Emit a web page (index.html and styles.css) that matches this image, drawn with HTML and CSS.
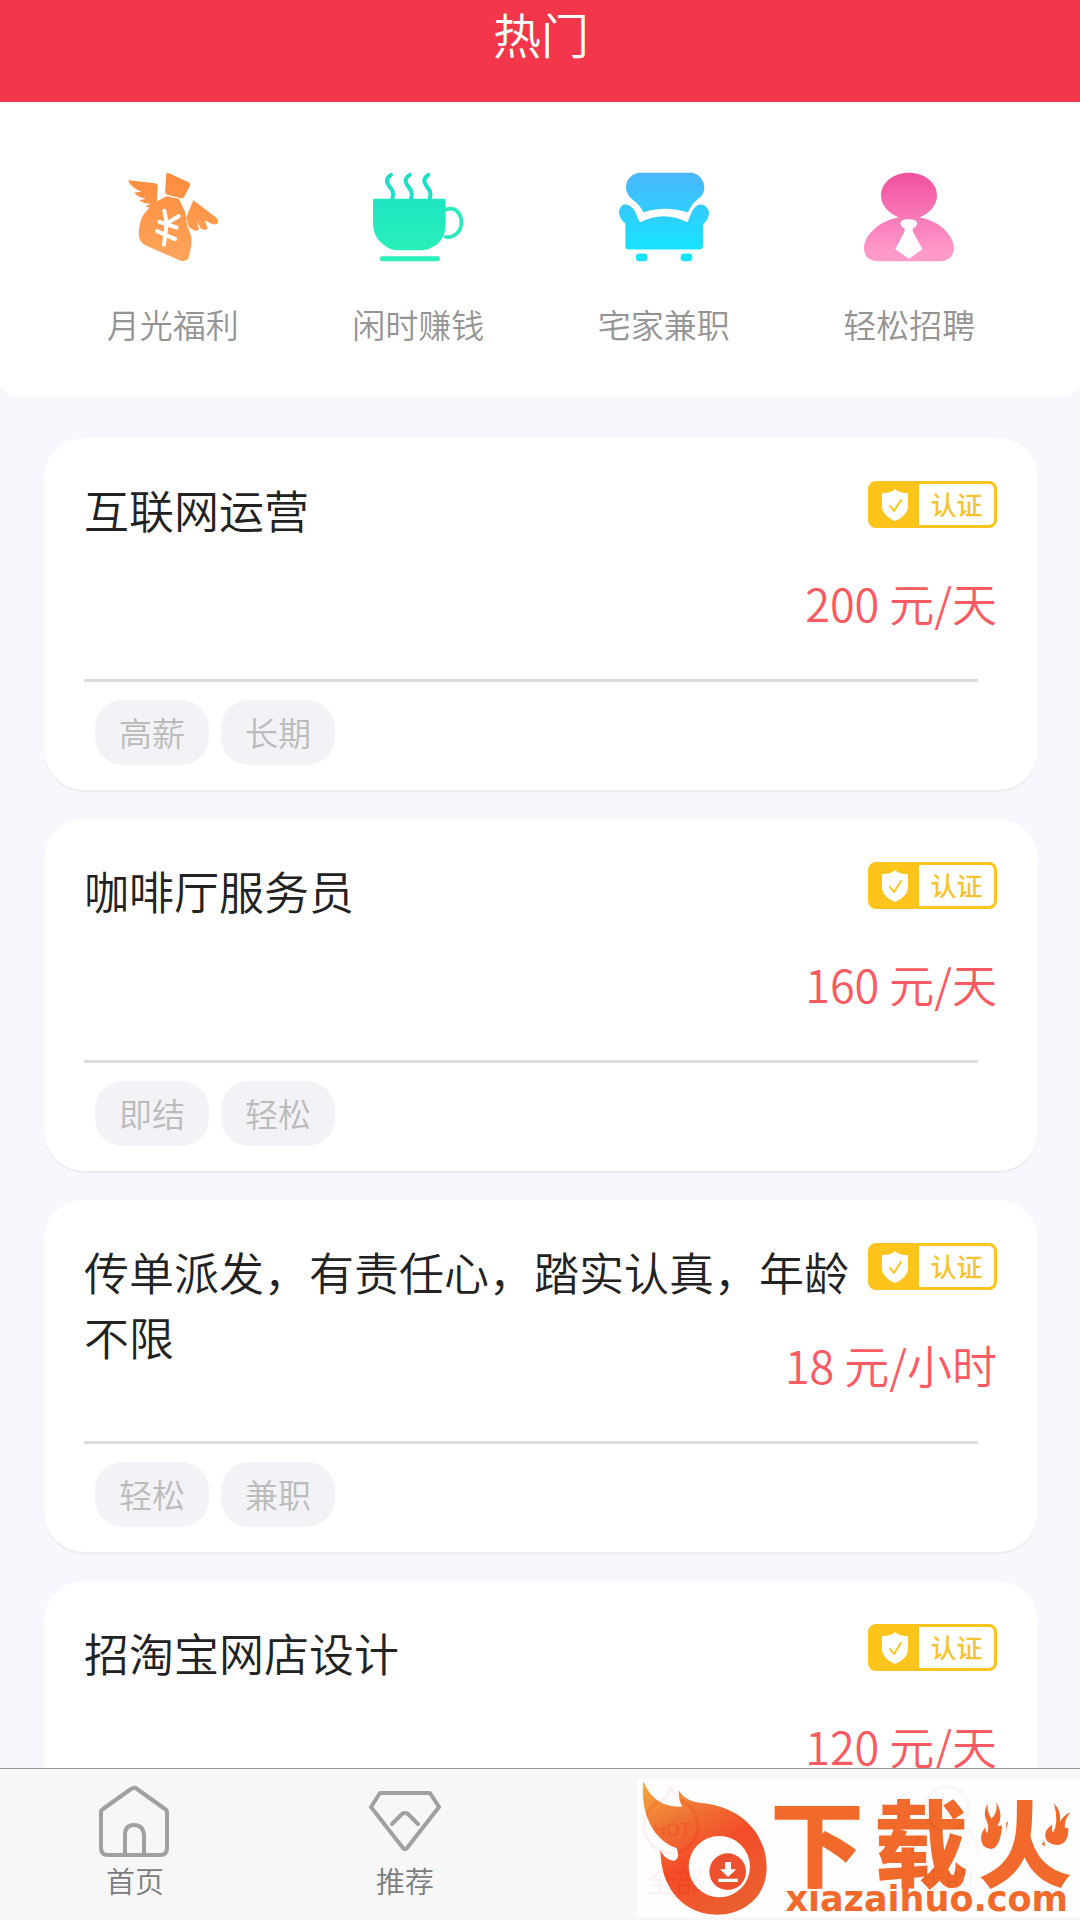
FILE: index.html
```html
<!DOCTYPE html>
<html lang="zh-CN">
<head>
<meta charset="utf-8">
<meta name="viewport" content="width=device-width, initial-scale=1">
<title>热门</title>
<link rel="stylesheet" href="styles.css">
</head>
<body>
<svg class="defs" width="0" height="0" aria-hidden="true">
  <defs>
    <symbol id="shield" viewBox="0 0 26 32">
      <path fill="#fff" d="M13 0c3 3 7 4 13 4v13c0 7-6 12-13 15C6 29 0 24 0 17V4c6 0 10-1 13-4z"/>
      <path fill="none" stroke="#fdc51c" stroke-width="2" stroke-linecap="round" stroke-linejoin="round" d="M8 17l4 5 7-11"/>
    </symbol>
  </defs>
</svg>
<div class="app">
  <header class="header"><h1 class="header-title">热门</h1></header>
  <main class="content">
    <nav class="shortcuts">
      <a class="shortcut" href="#">
        <svg class="shortcut-icon" viewBox="0 0 270 265">
          <defs><linearGradient id="g1" x1="0" y1="0" x2="0" y2="265" gradientUnits="userSpaceOnUse"><stop offset="0" stop-color="#ff8b3d"/><stop offset="1" stop-color="#ffa65c"/></linearGradient></defs>
          <g fill="url(#g1)">
            <path d="M115 4q3-6 8-3l60 28q5 4 3 10l-18 34q-4 5-10 3l-40-10q-8-3-7-10z"/>
            <path d="M0 22l82 9q8 2 7 10l-3 52q-8 3-14 13-9-1-19-6l15-7q-24-1-33-11l19-5q-25-3-35-18l21-2Q8 43 0 22z"/>
            <path d="M196 82l68 52q10 10 4 18-8 6-18 0l-20-10 9 25q-10 8-21-1l-12-22 7 26q-10 8-20-1l-11-6q-3-16-8-28z"/>
            <path d="M116 70l36 8q14 26 20 42 3 22 6 42 16 28 12 56l-8 37q-8 13-24 9L54 218Q28 208 33 170q2-26 14-45l29-35q16-7 40-20z"/>
          </g>
          <path fill="none" stroke="#fff" stroke-width="12" stroke-linecap="round" stroke-linejoin="round" d="M109 114l7 37 36-21M116 151l-8 65M94 147l52 17M87 175l54 24"/>
        </svg>
        <span class="shortcut-label">月光福利</span>
      </a>
      <a class="shortcut" href="#">
        <svg class="shortcut-icon" viewBox="0 0 270 265">
          <defs><linearGradient id="g2" x1="0" y1="0" x2="0" y2="265" gradientUnits="userSpaceOnUse"><stop offset="0" stop-color="#18dfc5"/><stop offset="1" stop-color="#2bf2b8"/></linearGradient></defs>
          <path fill="url(#g2)" d="M4 78h210q4 0 4 6v70q0 50-42 70-12 8-30 8H74q-20 0-36-12Q0 196 0 150V82q0-4 4-4zM26 250h170q5 0 5 7t-5 8H26q-5 0-5-8t5-7z"/>
          <path fill="none" stroke="#28eabc" stroke-width="11" stroke-linecap="round" d="M219 110c28-10 46 12 46 40s-24 46-47 42"/>
          <path fill="none" stroke="#1be0c6" stroke-width="12" stroke-linecap="round" d="M54 6c-12 8-16 18-8 30s20 22 12 42M110 6c-12 8-16 18-8 30s20 22 12 42M166 6c-12 8-16 18-8 30s20 22 12 42"/>
        </svg>
        <span class="shortcut-label">闲时赚钱</span>
      </a>
      <a class="shortcut" href="#">
        <svg class="shortcut-icon" viewBox="0 0 270 265">
          <defs><linearGradient id="g3" x1="0" y1="0" x2="0" y2="230" gradientUnits="userSpaceOnUse"><stop offset="0" stop-color="#4bb5fd"/><stop offset="1" stop-color="#17e4fe"/></linearGradient></defs>
          <path fill="url(#g3)" d="M57 0h164q34 10 35 46-2 22-20 33-20 16-29 40-73-22-134 0Q64 96 40 80 20 62 21 42 23 10 57 0zM20 94q26 4 37 44l6 10q72-36 142 0 6-10 10-24 14-34 38-28 22 12 15 36-4 14-16 22v68q-2 8-10 8H28q-8 0-9-8v-70Q0 138 0 116q4-22 20-22zM60 242h17q8 0 8 8v7q0 8-8 8H60q-8 0-9-8v-7q1-8 9-8zM194 242h17q8 0 9 8v7q-1 8-9 8h-17q-8 0-9-8v-7q1-8 9-8z"/>
        </svg>
        <span class="shortcut-label">宅家兼职</span>
      </a>
      <a class="shortcut" href="#">
        <svg class="shortcut-icon" viewBox="0 0 270 265">
          <defs><linearGradient id="g4" x1="0" y1="0" x2="0" y2="240" gradientUnits="userSpaceOnUse"><stop offset="0" stop-color="#f0509f"/><stop offset="1" stop-color="#ff9acb"/></linearGradient></defs>
          <path fill="url(#g4)" d="M134 0c48 0 85 30 85 68 0 28-20 52-52 66 60 10 103 54 103 94q-4 37-42 37H40Q2 264 0 228c0-40 44-84 104-94-32-14-53-38-53-66C51 30 88 0 134 0z"/>
          <path fill="#fff" d="M109 150q2-10 25-11 23 1 26 11-3 14-14 17v8l29 54-40 29-41-29 28-54v-8q-11-3-13-17z"/>
        </svg>
        <span class="shortcut-label">轻松招聘</span>
      </a>
    </nav>
    <ul class="jobs">
      <li class="job">
        <div class="job-main">
          <h2 class="job-title">互联网运营</h2>
          <div class="job-side">
            <span class="badge"><span class="badge-mark"><svg class="badge-icon"><use href="#shield"/></svg></span><span class="badge-text">认证</span></span>
            <span class="price">200 元/天</span>
          </div>
        </div>
        <div class="tags"><span class="tag">高薪</span><span class="tag">长期</span></div>
      </li>
      <li class="job">
        <div class="job-main">
          <h2 class="job-title">咖啡厅服务员</h2>
          <div class="job-side">
            <span class="badge"><span class="badge-mark"><svg class="badge-icon"><use href="#shield"/></svg></span><span class="badge-text">认证</span></span>
            <span class="price">160 元/天</span>
          </div>
        </div>
        <div class="tags"><span class="tag">即结</span><span class="tag">轻松</span></div>
      </li>
      <li class="job">
        <div class="job-main">
          <h2 class="job-title">传单派发，有责任心，踏实认真，年龄不限</h2>
          <div class="job-side">
            <span class="badge"><span class="badge-mark"><svg class="badge-icon"><use href="#shield"/></svg></span><span class="badge-text">认证</span></span>
            <span class="price">18 元/小时</span>
          </div>
        </div>
        <div class="tags"><span class="tag">轻松</span><span class="tag">兼职</span></div>
      </li>
      <li class="job">
        <div class="job-main">
          <h2 class="job-title">招淘宝网店设计</h2>
          <div class="job-side">
            <span class="badge"><span class="badge-mark"><svg class="badge-icon"><use href="#shield"/></svg></span><span class="badge-text">认证</span></span>
            <span class="price">120 元/天</span>
          </div>
        </div>
      </li>
    </ul>
  </main>
  <nav class="tabbar">
    <a class="tab" href="#">
      <svg class="tab-icon" viewBox="0 0 72 72"><path d="M35 3q1-1 3 1l28 20q2 1 2 3v36q0 7-7 7H9q-7 0-7-7V27q0-2 2-3L32 4q2-1 3-1zM26 70V50q0-10 9-10t10 10v20"/></svg>
      <span>首页</span>
    </a>
    <a class="tab" href="#">
      <svg class="tab-icon" viewBox="0 0 72 72"><path d="M11 8h50L70 22 38 63q-2 2-4 0L2 22z"/><path stroke-linecap="round" d="M23 39l10-10q3-2 6 0l10 10"/></svg>
      <span>推荐</span>
    </a>
    <a class="tab tab-active" href="#">
      <svg class="tab-icon" viewBox="0 0 72 72"><path stroke-width="3" d="M32 2q4 9 10 14a27 27 0 1 1-20 0q8-5 10-14z"/><text class="hot" x="33" y="51" text-anchor="middle">HOT</text></svg>
      <span>全部</span>
    </a>
    <a class="tab" href="#">
      <svg class="tab-icon" viewBox="0 0 72 72"><circle cx="38" cy="24" r="22"/><path d="M4 70q0-16 18-26M54 40q14 10 16 30"/></svg>
      <span>我的</span>
    </a>
  </nav>
  <aside class="watermark">
    <svg class="watermark-logo" viewBox="60 117 384 414">
      <defs>
        <linearGradient id="fire" x1="80" y1="130" x2="300" y2="520" gradientUnits="userSpaceOnUse"><stop offset="0" stop-color="#f9a030"/><stop offset=".3" stop-color="#ee6c28"/><stop offset=".6" stop-color="#f4401a"/><stop offset="1" stop-color="#ea5420"/></linearGradient>
      </defs>
      <path fill="url(#fire)" d="M70 123c20 48 50 78 116 77-8-18-10-32-10-50 14 24 34 34 62 38 130 10 202 96 202 196 0 80-62 140-150 140-96 0-168-76-169-194 8 18 20 30 40 32 16-2 16-24 8-38C100 300 60 220 70 123z"/>
      <ellipse cx="298" cy="380" rx="92" ry="92" fill="#fff"/>
      <circle cx="323" cy="395" r="55" fill="#ec4420"/>
      <path fill="#fff" d="M315 366h18v22h16l-25 23-24-23h15zM295 416h59v10h-59z"/>
    </svg>
    <div class="watermark-text">
      <span class="watermark-name"><span>下</span><span>载</span><span class="fire">火<svg class="flames" viewBox="0 0 270 145"><path fill="#fff" d="M-12-10h92l-2 90-12 70h-78zM184-10h100v160h-84l-16-70z"/><path fill="#f2601c" d="M20 60q-14-24 2-56-2 26 12 46Q54 30 48 0q24 44 4 72l14 0q-6 66-32 70Q2 140 2 108q2-20 14-32 0 16 4 18 8-16 0-34zM222 4q24 24 18 56 16-24 32-28-20 24-16 46 6 4 10-2 2 50-32 54-36-2-38-28 0-20 22-34-4 20 2 24Q238 60 222 4z"/></svg></span></span>
      <span class="watermark-site">xiazaihuo.com</span>
    </div>
  </aside>
</div>
</body>
</html>
```
FILE: styles.css
```css
* { box-sizing: border-box; }

body {
  margin: 0;
  background: #f7f7fd;
  color: #222;
  font-family: "Noto Sans CJK SC", sans-serif;
  font-weight: 350;
}

a { color: inherit; text-decoration: none; }

.defs { position: absolute; }

.app {
  display: flex;
  flex-direction: column;
  height: 100vh;
  overflow: hidden;
}

.header {
  flex: none;
  height: 102px;
  padding: 1px 0 0 2px;
  background: #f3364a;
  text-align: center;
}

.header-title {
  margin: 0;
  color: #fff;
  font-size: 48px;
  font-weight: 350;
  line-height: 64px;
}

.content {
  flex: 1;
  min-height: 0;
  overflow: hidden;
}

.shortcuts {
  display: flex;
  padding: 70px 48px 48px 50px;
  background: #fff;
  border-radius: 0 0 16px 16px;
}

.shortcut {
  flex: 1;
  display: flex;
  flex-direction: column;
  align-items: center;
  gap: 38px;
}

.shortcut-icon { width: 90px; height: 90px; }

.shortcut-label {
  color: #949494;
  font-size: 33px;
  line-height: 48px;
}

.jobs {
  display: flex;
  flex-direction: column;
  gap: 29px;
  margin: 0;
  padding: 42px 42px 41px 44px;
  list-style: none;
}

.job {
  min-height: 352px;
  padding: 39px 41px 24px 40px;
  background: #fff;
  border-radius: 40px;
  box-shadow: 0 2px 1px #ececee;
}

.job-main {
  display: flex;
  justify-content: space-between;
  height: 202px;
}

.job-title {
  flex: 1;
  margin: 0;
  font-size: 45px;
  font-weight: 350;
  line-height: 65px;
}

.job-side {
  display: flex;
  flex-direction: column;
  align-items: flex-end;
  gap: 42px;
  width: 132px;
  padding-top: 4px;
}

.badge {
  display: flex;
  width: 129px;
  height: 47px;
  border: 3px solid #fdc51c;
  border-radius: 8px;
}

.badge-mark {
  display: flex;
  align-items: center;
  justify-content: center;
  width: 48px;
  background: #fdc51c;
}

.badge-icon { width: 26px; height: 32px; }

.badge-text {
  flex: 1;
  color: #f5c332;
  font-size: 26px;
  font-weight: 500;
  line-height: 39px;
  text-align: center;
}

.price {
  color: #fc5a62;
  font-size: 45px;
  line-height: 65px;
  white-space: nowrap;
}

.tags {
  display: flex;
  gap: 12px;
  margin-right: 19px;
  padding: 18px 11px 0;
  border-top: 3px solid #ddd;
}

.tag {
  padding: 0 24px;
  background: #f2f2f7;
  border-radius: 28px;
  color: #bbb;
  font-size: 33px;
  line-height: 65px;
}

.tabbar {
  flex: none;
  display: flex;
  height: 152px;
  padding-top: 16px;
  background: #f7f7f7;
  border-top: 1px solid #999;
}

.tab {
  flex: 1;
  display: flex;
  flex-direction: column;
  align-items: center;
  gap: 2px;
  color: #797d80;
  font-size: 29px;
  line-height: 42px;
}

.tab-icon {
  width: 72px;
  height: 72px;
  fill: none;
  stroke: #a0a0a0;
  stroke-width: 4;
  stroke-linejoin: round;
}

.tab-active { color: #f3364a; }
.tab-active .tab-icon { stroke: #f3364a; }

.hot {
  fill: #f3364a;
  stroke: none;
  font: 700 18px "Liberation Sans", sans-serif;
}

.watermark {
  position: absolute;
  right: 0;
  bottom: 2px;
  display: flex;
  width: 443px;
  height: 139px;
  padding-left: 3px;
  background: #fff;
  color: #f2601c;
  opacity: 0.93;
}

.watermark-logo { flex: none; width: 128px; height: 138px; }

.watermark-text {
  display: flex;
  flex-direction: column;
  align-items: flex-end;
  gap: 2px;
  padding: 17px 0 0 2px;
}

.watermark-name {
  display: flex;
  gap: 10px;
  font-size: 94px;
  font-weight: 900;
  line-height: 86px;
}

.fire { position: relative; }

.flames {
  position: absolute;
  left: 2px;
  top: 6px;
  width: 90px;
  height: 48px;
  overflow: visible;
}

.watermark-site {
  padding-right: 4px;
  font-family: "DejaVu Sans", sans-serif;
  font-size: 35px;
  font-weight: 700;
  line-height: 30px;
}
```
